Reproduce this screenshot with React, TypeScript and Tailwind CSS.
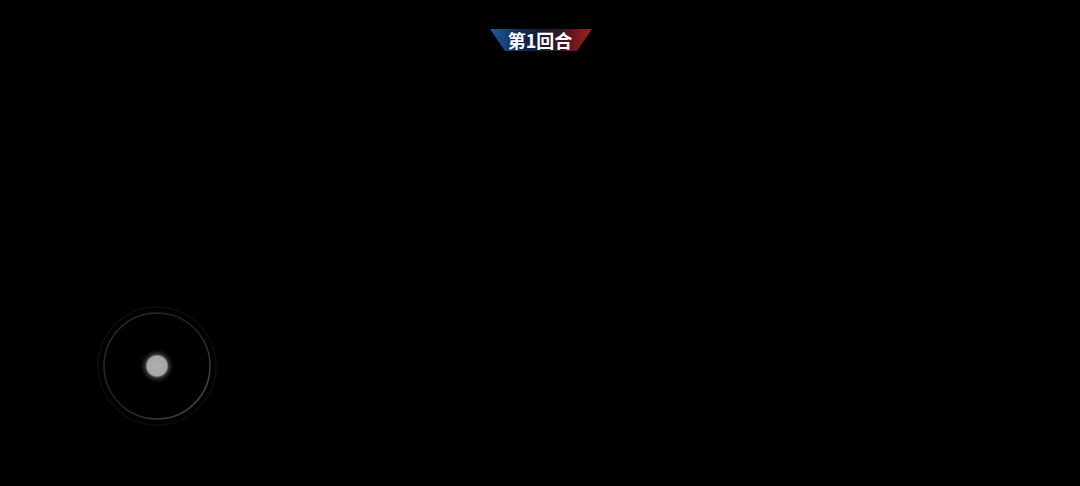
export default function App() {
  return (
    <main className="relative h-[486px] w-[1080px] overflow-hidden bg-black font-['Noto_Sans_CJK_SC',sans-serif]">
      <div className="flex justify-center pt-[29px]">
        <div className="relative ml-[2px] flex h-[22px] w-[102px] items-center justify-center">
          <svg className="absolute inset-0" width="102" height="22" viewBox="0 0 102 22">
            <defs>
              <linearGradient id="ban" x1="0" y1="0" x2="1" y2="0">
                <stop offset="0" stopColor="#1f5aa0" />
                <stop offset="0.3" stopColor="#132a55" />
                <stop offset="0.5" stopColor="#141b33" />
                <stop offset="0.7" stopColor="#3a1424" />
                <stop offset="1" stopColor="#b01d1d" />
              </linearGradient>
            </defs>
            <polygon points="0,0 102,0 87,22 15,22" fill="url(#ban)" />
          </svg>
          <span className="relative -ml-[2px] text-[18px] font-bold leading-none text-white">第1回合</span>
        </div>
      </div>

      <div className="absolute left-[97px] top-[306px] h-[120px] w-[120px]">
        <svg width="120" height="120" viewBox="0 0 120 120">
          <defs>
            <linearGradient id="ring" x1="0" y1="0" x2="1" y2="1">
              <stop offset="0" stopColor="#2e2e2e" />
              <stop offset="0.5" stopColor="#222" />
              <stop offset="1" stopColor="#555" />
            </linearGradient>
            <radialGradient id="knob" cx="0.5" cy="0.5" r="0.5">
              <stop offset="0" stopColor="#b0b0b0" />
              <stop offset="0.55" stopColor="#a6a6a6" />
              <stop offset="0.65" stopColor="#333" />
              <stop offset="1" stopColor="#000000" stopOpacity="0" />
            </radialGradient>
          </defs>
          <circle cx="60" cy="60" r="59" fill="none" stroke="#0d0d0d" strokeWidth="1.5" />
          <circle cx="60" cy="60" r="53" fill="none" stroke="url(#ring)" strokeWidth="1.5" />
          <circle cx="60" cy="60" r="18" fill="url(#knob)" />
        </svg>
      </div>
    </main>
  );
}
